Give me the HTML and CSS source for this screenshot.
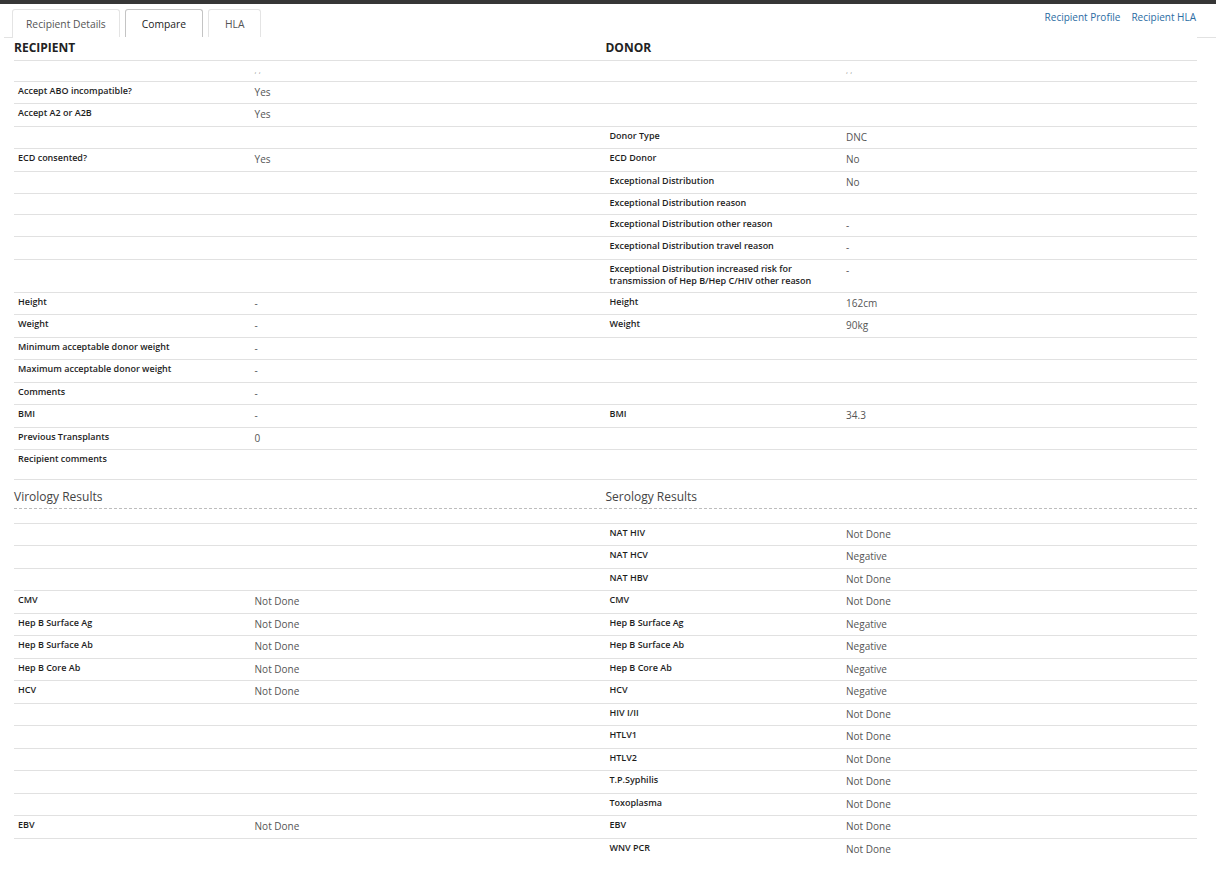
FILE: index.html
```html
<!DOCTYPE html>
<html lang="en">
<head>
    <meta charset="UTF-8">
    <title>Compare</title>
    <link rel="stylesheet" href="styles.css">
</head>
<body>
    <div class="topbar"></div>
    <div class="tabbar">
        <ul class="tabs">
            <li class="tab">Recipient Details</li>
            <li class="tab active">Compare</li>
            <li class="tab">HLA</li>
        </ul>
        <div class="links">
            <a href="#">Recipient Profile</a>
            <a href="#">Recipient HLA</a>
        </div>
    </div>
    <div class="pane">
        <table class="compare details">
            <colgroup>
                <col class="c-lbl"><col class="c-val"><col class="c-lbl"><col class="c-val">
            </colgroup>
            <tr>
                <th colspan="2" class="head">RECIPIENT</th>
                <th colspan="2" class="head">DONOR</th>
            </tr>
            <tr>
                <td class="lbl"></td><td class="val tick">, ,</td>
                <td class="lbl"></td><td class="val tick">, ,</td>
            </tr>
            <tr>
                <td class="lbl">Accept ABO incompatible?</td><td class="val">Yes</td>
                <td class="lbl"></td><td class="val"></td>
            </tr>
            <tr>
                <td class="lbl">Accept A2 or A2B</td><td class="val">Yes</td>
                <td class="lbl"></td><td class="val"></td>
            </tr>
            <tr>
                <td class="lbl"></td><td class="val"></td>
                <td class="lbl">Donor Type</td><td class="val">DNC</td>
            </tr>
            <tr>
                <td class="lbl">ECD consented?</td><td class="val">Yes</td>
                <td class="lbl">ECD Donor</td><td class="val">No</td>
            </tr>
            <tr>
                <td class="lbl"></td><td class="val"></td>
                <td class="lbl">Exceptional Distribution</td><td class="val">No</td>
            </tr>
            <tr>
                <td class="lbl"></td><td></td>
                <td class="lbl">Exceptional Distribution reason</td><td></td>
            </tr>
            <tr>
                <td class="lbl"></td><td class="val"></td>
                <td class="lbl">Exceptional Distribution other reason</td><td class="val">-</td>
            </tr>
            <tr>
                <td class="lbl"></td><td class="val"></td>
                <td class="lbl">Exceptional Distribution travel reason</td><td class="val">-</td>
            </tr>
            <tr>
                <td class="lbl"></td><td class="val"></td>
                <td class="lbl">Exceptional Distribution increased risk for transmission of Hep B/Hep C/HIV other reason</td><td class="val">-</td>
            </tr>
            <tr>
                <td class="lbl">Height</td><td class="val">-</td>
                <td class="lbl">Height</td><td class="val">162cm</td>
            </tr>
            <tr>
                <td class="lbl">Weight</td><td class="val">-</td>
                <td class="lbl">Weight</td><td class="val">90kg</td>
            </tr>
            <tr>
                <td class="lbl">Minimum acceptable donor weight</td><td class="val">-</td>
                <td class="lbl"></td><td class="val"></td>
            </tr>
            <tr>
                <td class="lbl">Maximum acceptable donor weight</td><td class="val">-</td>
                <td class="lbl"></td><td class="val"></td>
            </tr>
            <tr>
                <td class="lbl">Comments</td><td class="val">-</td>
                <td class="lbl"></td><td class="val"></td>
            </tr>
            <tr>
                <td class="lbl">BMI</td><td class="val">-</td>
                <td class="lbl">BMI</td><td class="val">34.3</td>
            </tr>
            <tr>
                <td class="lbl">Previous Transplants</td><td class="val">0</td>
                <td class="lbl"></td><td class="val"></td>
            </tr>
            <tr>
                <td class="lbl">Recipient comments</td><td><div class="comment-box"></div></td>
                <td class="lbl"></td><td></td>
            </tr>
        </table>

        <div class="section-head">
            <div>Virology Results</div>
            <div>Serology Results</div>
        </div>

        <table class="compare">
            <colgroup>
                <col class="c-lbl"><col class="c-val"><col class="c-lbl"><col class="c-val">
            </colgroup>
            <tr><td class="lbl"></td><td class="val"></td><td class="lbl">NAT HIV</td><td class="val">Not Done</td></tr>
            <tr><td class="lbl"></td><td class="val"></td><td class="lbl">NAT HCV</td><td class="val">Negative</td></tr>
            <tr><td class="lbl"></td><td class="val"></td><td class="lbl">NAT HBV</td><td class="val">Not Done</td></tr>
            <tr><td class="lbl">CMV</td><td class="val">Not Done</td><td class="lbl">CMV</td><td class="val">Not Done</td></tr>
            <tr><td class="lbl">Hep B Surface Ag</td><td class="val">Not Done</td><td class="lbl">Hep B Surface Ag</td><td class="val">Negative</td></tr>
            <tr><td class="lbl">Hep B Surface Ab</td><td class="val">Not Done</td><td class="lbl">Hep B Surface Ab</td><td class="val">Negative</td></tr>
            <tr><td class="lbl">Hep B Core Ab</td><td class="val">Not Done</td><td class="lbl">Hep B Core Ab</td><td class="val">Negative</td></tr>
            <tr><td class="lbl">HCV</td><td class="val">Not Done</td><td class="lbl">HCV</td><td class="val">Negative</td></tr>
            <tr><td class="lbl"></td><td class="val"></td><td class="lbl">HIV I/II</td><td class="val">Not Done</td></tr>
            <tr><td class="lbl"></td><td class="val"></td><td class="lbl">HTLV1</td><td class="val">Not Done</td></tr>
            <tr><td class="lbl"></td><td class="val"></td><td class="lbl">HTLV2</td><td class="val">Not Done</td></tr>
            <tr><td class="lbl"></td><td class="val"></td><td class="lbl">T.P.Syphilis</td><td class="val">Not Done</td></tr>
            <tr><td class="lbl"></td><td class="val"></td><td class="lbl">Toxoplasma</td><td class="val">Not Done</td></tr>
            <tr><td class="lbl">EBV</td><td class="val">Not Done</td><td class="lbl">EBV</td><td class="val">Not Done</td></tr>
            <tr><td class="lbl"></td><td class="val"></td><td class="lbl">WNV PCR</td><td class="val">Not Done</td></tr>
        </table>
    </div>
</body>
</html>
```

FILE: styles.css
```css
body {
    margin: 0;
    font-family: "Open Sans", "DejaVu Sans", sans-serif;
    color: #333;
    background: #fff;
}
.topbar {
    height: 4px;
    background: #363636;
}
.tabbar {
    display: flex;
    justify-content: space-between;
    align-items: flex-start;
    margin: 5px 0 0 4px;
    padding: 0 20px 0 8px;
    border-bottom: 1px solid #e2e2e2;
}
.tabs {
    display: flex;
    gap: 5px;
    list-style: none;
    margin: 0 0 -1px;
    padding: 0;
}
.tab {
    height: 28px;
    line-height: 28px;
    padding: 0 16px;
    border: 1px solid #e4e4e4;
    border-bottom: none;
    border-radius: 3px 3px 0 0;
    font-size: 10.3px;
    color: #555;
    background: #fff;
}
.tab:first-child {
    padding: 0 13px;
}
.tab.active {
    border-color: #c4c4c4;
    color: #222;
}
.links {
    display: flex;
    gap: 11px;
    padding-top: 1px;
    line-height: 14px;
    font-size: 10px;
}
.links a {
    color: #2b6ca3;
    text-decoration: none;
}
.pane {
    position: relative;
    background: #fff;
    margin: -1px 19px 0 14px;
}
.compare {
    width: 100%;
    border-collapse: collapse;
    table-layout: fixed;
}
.c-lbl {
    width: 20%;
}
.c-val {
    width: 30%;
}
.compare th.head {
    text-align: left;
    font-size: 12px;
    font-weight: 700;
    color: #222;
    line-height: 16px;
    padding: 3px 0 4px;
}
.compare td {
    border-top: 1px solid #e1e1e1;
    padding: 3px 4px 4px;
    vertical-align: top;
}
.details tr:last-child td {
    border-bottom: 1px solid #e1e1e1;
}
.compare td.lbl {
    font-size: 9px;
    font-weight: 600;
    line-height: 12.5px;
    color: #1e1e1e;
}
.compare td.val {
    font-size: 10px;
    line-height: 14.5px;
    color: #555;
}
.compare td.tick {
    font-size: 8px;
    line-height: 12.5px;
    color: #999;
}
.comment-box {
    min-height: 21.5px;
}
.section-head {
    display: flex;
    border-bottom: 1px dashed #bdbdbd;
    margin-bottom: 14px;
}
.section-head div {
    flex: 1;
    font-size: 12px;
    line-height: 17px;
    padding: 8px 0 3px;
    color: #444;
}
```
